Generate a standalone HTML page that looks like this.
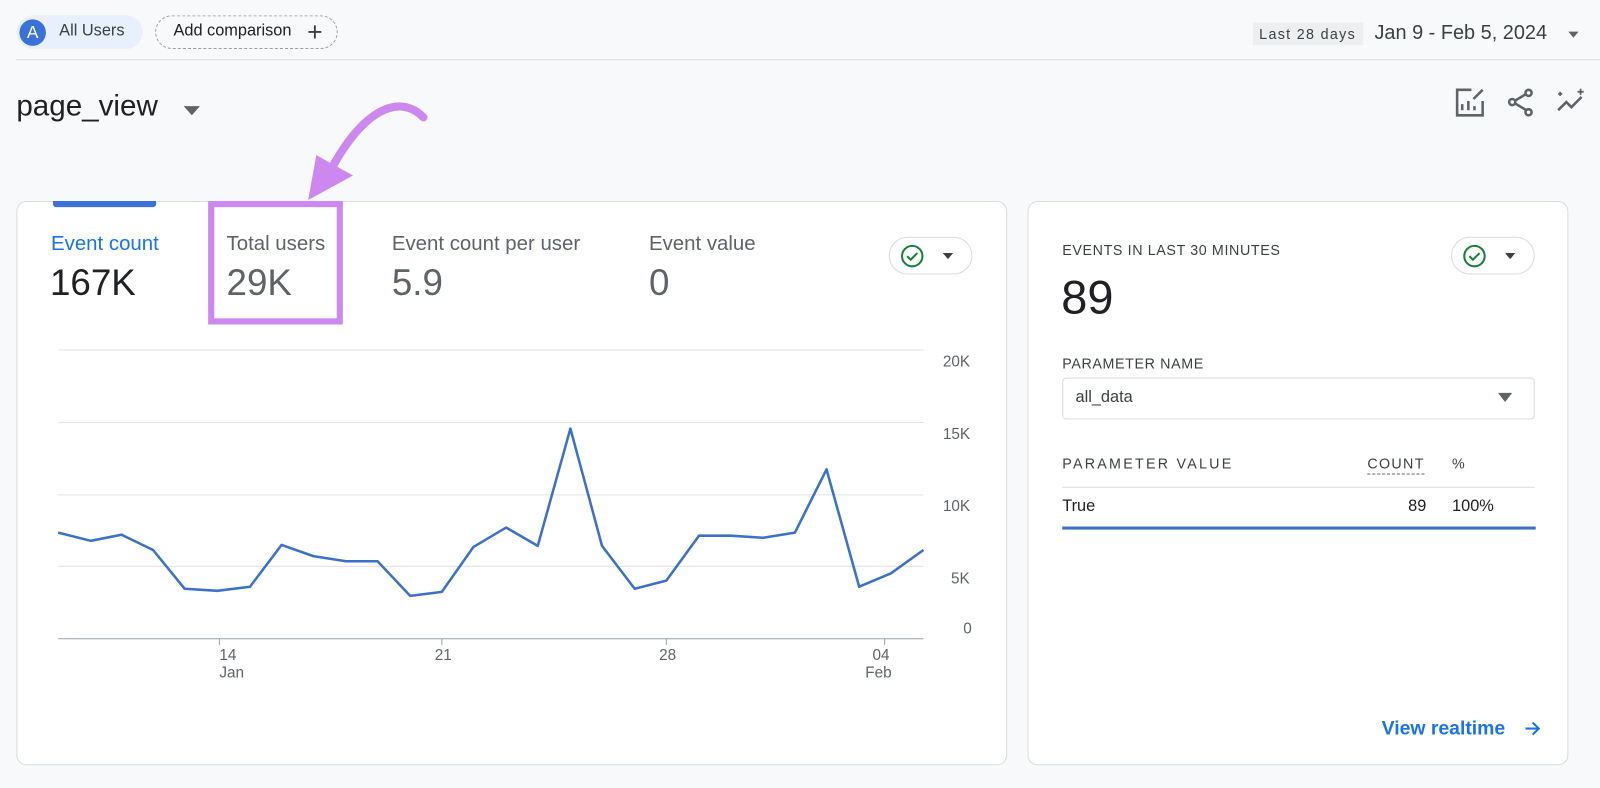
<!DOCTYPE html>
<html><head><meta charset="utf-8"><style>
*{margin:0;padding:0;box-sizing:border-box}
html,body{width:1600px;height:788px;overflow:hidden;background:#f8f9fa}
body{font-family:"Liberation Sans",sans-serif;color:#202124}
#w{position:absolute;left:0;top:0;width:1568px;height:772px;transform:scale(1.0204);transform-origin:0 0}
.abs{position:absolute}
.card{position:absolute;background:#fff;border:1px solid #dadce0;border-radius:10px}
.t{position:absolute;white-space:nowrap}
</style></head><body><div id="w">
<div class="abs" style="left:16px;top:15px;width:124px;height:33px;border-radius:17px;background:#e8f0fe"></div>
<div class="abs" style="left:19px;top:19px;width:26px;height:26px;border-radius:50%;background:#3b71d8;color:#fff;font-size:17px;text-align:center;line-height:26px">A</div>
<div class="t" style="left:58px;top:22px;font-size:16px;color:#3c4043">All Users</div>
<div class="abs" style="left:152px;top:15px;width:179px;height:33px;border:1.5px dashed #9aa0a6;border-radius:17px"></div>
<div class="t" style="left:170px;top:22px;font-size:16px;color:#202124">Add comparison</div>
<div class="t" style="left:301px;top:16px;font-size:26px;color:#3c4043;font-weight:300">+</div>
<div class="abs" style="left:1228px;top:22px;width:108px;height:22px;background:#eceef0"></div>
<div class="t" style="left:1234px;top:25px;font-size:14px;color:#3c4043;letter-spacing:1.3px">Last 28 days</div>
<div class="t" style="left:1347px;top:21px;font-size:19.5px;color:#3c4043">Jan 9 - Feb 5, 2024</div>
<div class="abs" style="left:1537px;top:31px;border:5px solid transparent;border-top:6px solid #5f6368"></div>
<div class="abs" style="left:16px;top:58px;width:1552px;height:1px;background:#dadce0"></div>
<div class="t" style="left:16px;top:88px;font-size:29px;color:#202124">page_view</div>
<div class="abs" style="left:180px;top:104px;border:8px solid transparent;border-top:9px solid #5f6368;border-bottom:0"></div>
<svg class="abs" style="left:1424px;top:84px" width="32" height="32" viewBox="0 0 32 32" fill="none" stroke="#5f6368" stroke-width="2.5"><path d="M18 4H4v25h25V15"/><path d="M9 24v-6M15 24v-9M21 24v-4"/><path d="M20 13l9-9" /></svg>
<svg class="abs" style="left:1474px;top:84px" width="32" height="32" viewBox="0 0 32 32" fill="none" stroke="#5f6368" stroke-width="2.5"><circle cx="24" cy="7" r="3"/><circle cx="8" cy="16" r="3"/><circle cx="24" cy="26" r="3"/><path d="M11 14.5l10-6M11 17.5l10 6"/></svg>
<svg class="abs" style="left:1522px;top:84px" width="36" height="32" viewBox="0 0 36 32" fill="none" stroke="#5f6368" stroke-width="2.5"><path d="M5 24l8-8 5 5 10-10"/><path d="M7 6v4M5 8h4M27 3v6M24 6h6" stroke-width="1.8"/></svg>
<div class="card" style="left:16px;top:197px;width:971px;height:553px"></div>
<div class="abs" style="left:52px;top:197px;width:101px;height:6px;background:#3b71d8;border-radius:0 0 3px 3px"></div>
<div class="t" style="left:50px;top:228px;font-size:20px;color:#1a73e8">Event count</div>
<div class="t" style="left:49px;top:256px;font-size:36px;color:#202124">167K</div>
<div class="t" style="left:222px;top:228px;font-size:20px;color:#5f6368">Total users</div>
<div class="t" style="left:222px;top:256px;font-size:36px;color:#5f6368">29K</div>
<div class="t" style="left:384px;top:228px;font-size:20px;color:#5f6368">Event count per user</div>
<div class="t" style="left:384px;top:256px;font-size:36px;color:#5f6368">5.9</div>
<div class="t" style="left:636px;top:228px;font-size:20px;color:#5f6368">Event value</div>
<div class="t" style="left:636px;top:256px;font-size:36px;color:#5f6368">0</div>
<div class="abs" style="left:871px;top:232px;width:82px;height:37px;border:1px solid #dadce0;border-radius:19px"></div>
<svg class="abs" style="left:882px;top:239px" width="24" height="24" viewBox="0 0 24 24" fill="none" stroke="#188038" stroke-width="2"><circle cx="12" cy="12" r="10"/><path d="M7 12l3.5 3.5L17 9"/></svg>
<div class="abs" style="left:924px;top:248px;border:5px solid transparent;border-top:6px solid #3c4043;border-bottom:0"></div>
<div class="abs" style="left:204px;top:197px;width:132px;height:121px;border:6px solid #cc88ee"></div>
<svg class="abs" style="left:290px;top:95px" width="140" height="110" viewBox="290 95 140 110"><path d="M415 115C390 90 355 110 325 165" fill="none" stroke="#cc88ee" stroke-width="8" stroke-linecap="round"/><path d="M302 196L310 152L346 172Z" fill="#cc88ee"/></svg>
<svg class="abs" style="left:0;top:0" width="1000" height="700">
<g stroke="#e3e3e3" stroke-width="1"><line x1="57" y1="343" x2="905" y2="343"/><line x1="57" y1="414" x2="905" y2="414"/><line x1="57" y1="485" x2="905" y2="485"/><line x1="57" y1="555" x2="905" y2="555"/></g>
<line x1="57" y1="626" x2="905" y2="626" stroke="#9aa0a6"/>
<g stroke="#9aa0a6"><line x1="215" y1="626" x2="215" y2="632"/><line x1="433" y1="626" x2="433" y2="632"/><line x1="653" y1="626" x2="653" y2="632"/><line x1="867" y1="626" x2="867" y2="632"/></g>
<polyline fill="none" stroke="#3b71c8" stroke-width="2.5" stroke-linejoin="round" points="57,522 89,530 119,524 150,539 181,577 213,579 245,575 276,534 307,545 339,550 370,550 402,584 433,580 464,536 496,517 527,535 559,420 590,535 622,577 653,569 685,525 716,525 748,527 779,522 810,460 842,575 873,562 905,539"/>
<g font-family="Liberation Sans" font-size="15" fill="#5f6368"><text x="924" y="359">20K</text><text x="924" y="430">15K</text><text x="924" y="501">10K</text><text x="932" y="572">5K</text><text x="944" y="621">0</text>
<text x="215" y="647">14</text><text x="215" y="664">Jan</text><text x="426" y="647">21</text><text x="646" y="647">28</text><text x="855" y="647">04</text><text x="848" y="664">Feb</text></g>
</svg>
<div class="card" style="left:1007px;top:197px;width:530px;height:553px"></div>
<div class="t" style="left:1041px;top:237px;font-size:14px;color:#3c4043;letter-spacing:.6px">EVENTS IN LAST 30 MINUTES</div>
<div class="t" style="left:1040px;top:264px;font-size:46px;color:#202124">89</div>
<div class="abs" style="left:1422px;top:232px;width:82px;height:37px;border:1px solid #dadce0;border-radius:19px"></div>
<svg class="abs" style="left:1433px;top:239px" width="24" height="24" viewBox="0 0 24 24" fill="none" stroke="#188038" stroke-width="2"><circle cx="12" cy="12" r="10"/><path d="M7 12l3.5 3.5L17 9"/></svg>
<div class="abs" style="left:1475px;top:248px;border:5px solid transparent;border-top:6px solid #3c4043;border-bottom:0"></div>
<div class="t" style="left:1041px;top:348px;font-size:14px;color:#3c4043;letter-spacing:.6px">PARAMETER NAME</div>
<div class="abs" style="left:1041px;top:370px;width:463px;height:41px;border:1px solid #dadce0;border-radius:4px"></div>
<div class="t" style="left:1054px;top:381px;font-size:16px;color:#3c4043">all_data</div>
<div class="abs" style="left:1468px;top:385px;border:7px solid transparent;border-top:9px solid #5f6368;border-bottom:0"></div>
<div class="t" style="left:1041px;top:446px;font-size:14px;color:#3c4043;letter-spacing:2.2px">PARAMETER VALUE</div>
<div class="t" style="left:1340px;top:446px;font-size:14px;color:#3c4043;letter-spacing:1.3px;border-bottom:1px dashed #5f6368;padding-bottom:2px">COUNT</div>
<div class="t" style="left:1423px;top:446px;font-size:14px;color:#3c4043">%</div>
<div class="abs" style="left:1041px;top:477px;width:463px;height:1px;background:#dadce0"></div>
<div class="t" style="left:1041px;top:488px;font-size:16px;color:#202124">True</div>
<div class="t" style="left:1380px;top:488px;font-size:16px;color:#202124">89</div>
<div class="t" style="left:1423px;top:488px;font-size:16px;color:#202124">100%</div>
<div class="abs" style="left:1041px;top:516px;width:464px;height:3px;background:#3b71c8"></div>
<div class="t" style="left:1354px;top:704px;font-size:19px;color:#1a73e8;font-weight:bold">View realtime</div>
<svg class="abs" style="left:1492px;top:704px" width="20" height="20" viewBox="0 0 20 20" fill="none" stroke="#1a73e8" stroke-width="2"><path d="M3 10h13M10 4l6 6-6 6"/></svg>
</div></body></html>
